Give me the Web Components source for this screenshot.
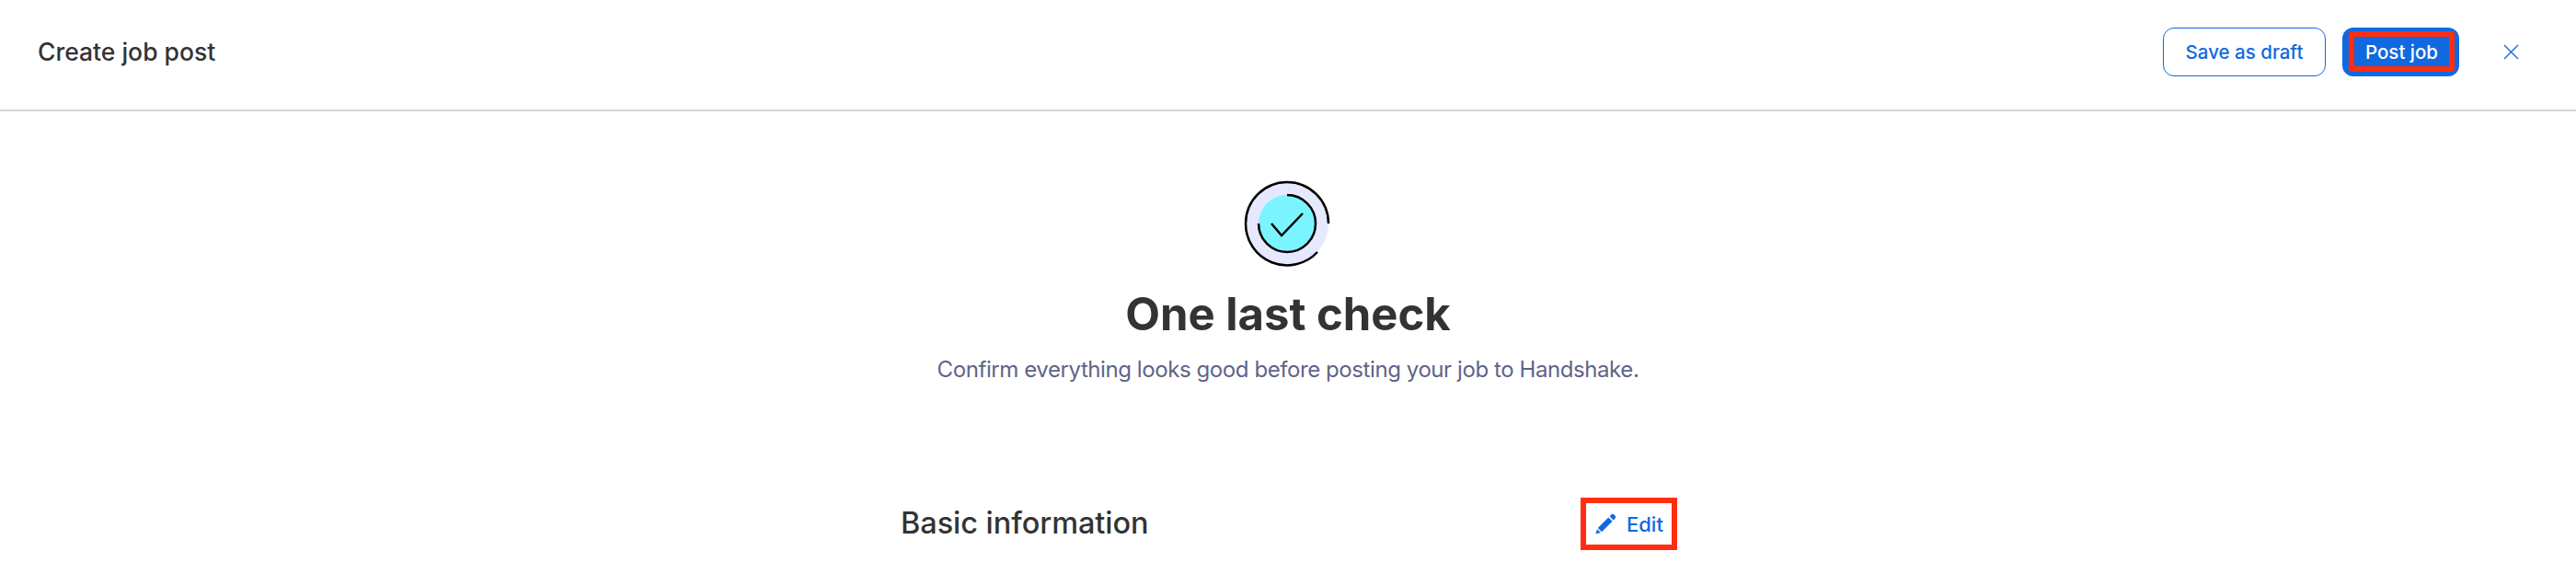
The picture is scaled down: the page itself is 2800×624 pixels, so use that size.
<!doctype html>
<html>
<head>
<meta charset="utf-8">
<style>
  html, body { margin: 0; background: #fff; }
  body { font-family: Inter, "Liberation Sans", sans-serif; color: #333; overflow: hidden; }
</style>
</head>
<body>
<job-header>
  <span slot="title">Create job post</span>
  <job-button slot="actions" variant="outline">Save as draft</job-button>
  <job-button slot="actions" variant="solid">Post job</job-button>
</job-header>
<job-intro>
  <span slot="title">One last check</span>
  <span slot="text">Confirm everything looks good before posting your job to Handshake.</span>
</job-intro>
<job-section>
  <span slot="title">Basic information</span>
</job-section>

<script>
class JobHeader extends HTMLElement {
  constructor() {
    super();
    this.attachShadow({ mode: "open" }).innerHTML = `
      <style>
        :host {
          display: flex;
          align-items: center;
          justify-content: space-between;
          box-sizing: border-box;
          height: 121px;
          padding: 0 62px 7px 41px;
          border-bottom: 2px solid #d4d4d4;
        }
        .title { font-size: 26.5px; font-weight: 500; color: #333; }
        .right { display: flex; align-items: center; gap: 18px; }
        .close { display: flex; margin-left: 30px; }
      </style>
      <div class="title"><slot name="title"></slot></div>
      <div class="right">
        <slot name="actions"></slot>
        <span class="close">
          <svg width="17" height="17" viewBox="0 0 17 17" fill="none" stroke="#1169e0" stroke-width="1.4">
            <path d="M1 1l15 15M16 1L1 16"/>
          </svg>
        </span>
      </div>`;
  }
}

class JobButton extends HTMLElement {
  constructor() {
    super();
    this.attachShadow({ mode: "open" }).innerHTML = `
      <style>
        :host {
          display: inline-flex;
          align-items: center;
          justify-content: center;
          box-sizing: border-box;
          height: 53px;
          border-radius: 12px;
          font-size: 20.5px;
          font-weight: 500;
          white-space: nowrap;
        }
        :host([variant=outline]) {
          width: 177px;
          color: #1169e0;
          background: #fff;
          border: 1.5px solid #1169e0;
        }
        :host([variant=solid]) {
          width: 127px;
          color: #fff;
          background: #1169e0;
        }
        :host([variant=solid]) .mark {
          box-sizing: border-box;
          width: 115px;
          height: 44px;
          margin-left: 2px;
          display: flex;
          align-items: center;
          justify-content: center;
          border: 6px solid #ff2d12;
        }
      </style>
      <span class="mark"><slot></slot></span>`;
  }
}

class JobIntro extends HTMLElement {
  constructor() {
    super();
    this.attachShadow({ mode: "open" }).innerHTML = `
      <style>
        :host {
          display: flex;
          flex-direction: column;
          align-items: center;
          padding-top: 74px;
        }
        svg { display: block; margin-left: -2px; }
        .title {
          margin-top: 22px;
          font-size: 49px;
          line-height: 58px;
          font-weight: 700;
          color: #333;
        }
        .text {
          margin-top: 13px;
          font-size: 24px;
          letter-spacing: -0.42px;
          line-height: 36px;
          color: #5f6488;
        }
      </style>
      <svg width="96" height="96" viewBox="0 0 96 96" fill="none" stroke-linecap="butt">
        <circle cx="48" cy="48" r="45" fill="#e6e9fd"/>
        <path d="M48 17a31 31 0 1 0 0 62a31 31 0 0 0 0-62z" fill="#7af5ff"/>
        <path d="M3 48A45 45 0 1 1 93 48" stroke="#000" stroke-width="2.5"/>
        <path d="M3 48A45 45 0 0 0 81 79" stroke="#000" stroke-width="2.5"/>
        <path d="M48 17A31 31 0 1 1 17 48" stroke="#000" stroke-width="2.5"/>
        <path d="M31 48l11 13 23-24" stroke="#000" stroke-width="2.5"/>
      </svg>
      <div class="title"><slot name="title"></slot></div>
      <div class="text"><slot name="text"></slot></div>`;
  }
}

class JobSection extends HTMLElement {
  constructor() {
    super();
    this.attachShadow({ mode: "open" }).innerHTML = `
      <style>
        :host {
          display: flex;
          align-items: center;
          justify-content: space-between;
          box-sizing: border-box;
          width: 844px;
          margin: 121px 0 0 979px;
        }
        .title { font-size: 32.4px; font-weight: 500; color: #333; padding-bottom: 3px; }
        .edit {
          box-sizing: border-box;
          display: flex;
          align-items: center;
          gap: 11px;
          padding-left: 9px;
          width: 105px;
          height: 57px;
          border: 6px solid #ff2d12;
          color: #1169e0;
          font-size: 22px;
          font-weight: 500;
        }
        svg { display: block; }
      </style>
      <div class="title"><slot name="title"></slot></div>
      <div class="edit">
        <svg width="24" height="24" viewBox="0 0 24 24" fill="#1169e0">
          <path d="M18.2 1.6a2.4 2.4 0 0 1 3.4 0l.8.8a2.4 2.4 0 0 1 0 3.4l-1.6 1.6-4.2-4.2zM15.3 4.5l4.2 4.2L8 20.2l-4.2-4.2zM3 17.2l3.8 3.8-5.4 1.6z"/>
        </svg>
        <span>Edit</span>
      </div>`;
  }
}

customElements.define("job-header", JobHeader);
customElements.define("job-button", JobButton);
customElements.define("job-intro", JobIntro);
customElements.define("job-section", JobSection);
</script>
</body>
</html>
